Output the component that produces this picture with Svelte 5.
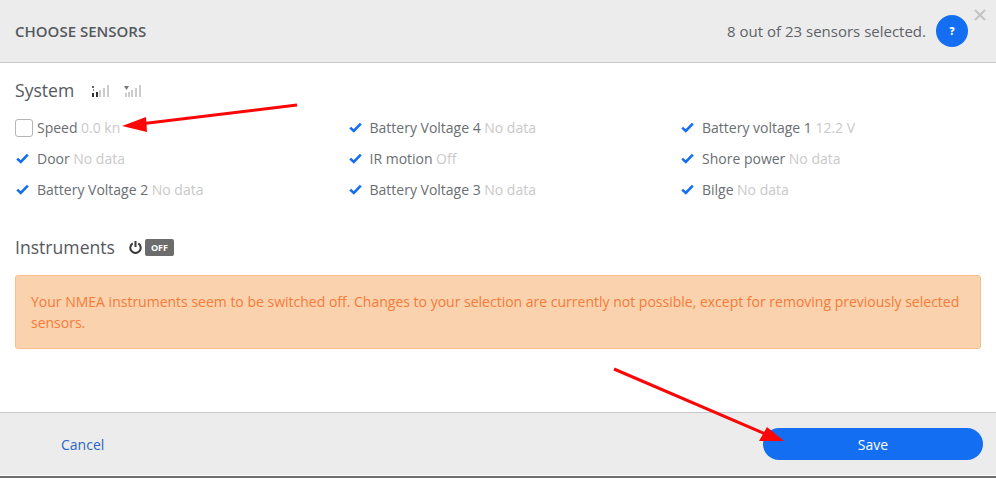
<script>
  const columns = [
    [
      { name: 'Speed', value: '0.0 kn', checked: false },
      { name: 'Door', value: 'No data', checked: true },
      { name: 'Battery Voltage 2', value: 'No data', checked: true }
    ],
    [
      { name: 'Battery Voltage 4', value: 'No data', checked: true },
      { name: 'IR motion', value: 'Off', checked: true },
      { name: 'Battery Voltage 3', value: 'No data', checked: true }
    ],
    [
      { name: 'Battery voltage 1', value: '12.2 V', checked: true },
      { name: 'Shore power', value: 'No data', checked: true },
      { name: 'Bilge', value: 'No data', checked: true }
    ]
  ];
</script>

<div class="page">
  <div class="modal">
    <header class="head">
      <h1>CHOOSE SENSORS</h1>
      <div class="count">
        <span>8 out of 23 sensors selected.</span>
        <span class="help">?</span>
      </div>
      <svg class="close" width="12" height="12" viewBox="0 0 12 12"><path d="M1 1L11 11M11 1L1 11" stroke="#c4c4c4" stroke-width="2.2" fill="none"/></svg>
    </header>

    <main class="body">
      <div class="title system">
        <h2>System</h2>
        <svg class="sig first" width="17" height="12" viewBox="0 0 17 12">
          <rect x="0" y="1" width="2" height="2" fill="#666"/>
          <rect x="1" y="4" width="1" height="2" fill="#888"/>
          <rect x="0" y="8" width="2" height="4" fill="#333"/>
          <rect x="4" y="7" width="2" height="5" fill="#333"/>
          <rect x="7" y="5" width="2" height="7" fill="#ccc"/>
          <rect x="11" y="3" width="2" height="9" fill="#ccc"/>
          <rect x="15" y="0" width="2" height="12" fill="#ccc"/>
        </svg>
        <svg class="sig" width="17" height="12" viewBox="0 0 17 12">
          <path d="M0 1h5L2.5 5z" fill="#777"/>
          <rect x="1" y="8" width="2" height="4" fill="#ccc"/>
          <rect x="4" y="7" width="2" height="5" fill="#ccc"/>
          <rect x="7" y="5" width="2" height="7" fill="#ccc"/>
          <rect x="11" y="3" width="2" height="9" fill="#ccc"/>
          <rect x="15" y="0" width="2" height="12" fill="#ccc"/>
        </svg>
      </div>

      <div class="grid">
        {#each columns as col}
          <div class="col">
            {#each col as s}
              <div class="row">
                {#if s.checked}
                  <svg class="tick" width="13" height="11" viewBox="0 0 13 11"><path d="M1.2 5.6L4.8 9L11.8 1.6" stroke="#136ef1" stroke-width="2.6" fill="none"/></svg>
                {:else}
                  <span class="box"></span>
                {/if}
                <span class="name">{s.name}</span>
                <span class="val">{s.value}</span>
              </div>
            {/each}
          </div>
        {/each}
      </div>

      <div class="title instruments">
        <h2>Instruments</h2>
        <svg class="power" width="13" height="13" viewBox="0 0 14 14"><path d="M4 2.6A5.6 5.6 0 1 0 10 2.6M7 0V6.5" stroke="#3a3a3a" stroke-width="2.2" fill="none"/></svg>
        <span class="off">OFF</span>
      </div>

      <div class="alert">Your NMEA instruments seem to be switched off. Changes to your selection are currently not possible, except for removing previously selected sensors.</div>
    </main>

    <footer class="foot">
      <span class="cancel">Cancel</span>
      <span class="save">Save</span>
    </footer>
  </div>

  <svg class="arrows" width="996" height="478" viewBox="0 0 996 478">
    <path d="M297 105L140 124" stroke="#fb0606" stroke-width="3" fill="none"/>
    <path d="M122 126L146 117L147 132z" fill="#fb0606"/>
    <path d="M614 369L770 436" stroke="#fb0606" stroke-width="3" fill="none"/>
    <path d="M784 441L759 441L767 427z" fill="#fb0606"/>
  </svg>
</div>

<style>
  :global(body) { margin: 0; background: #fff; }
  .page {
    position: relative;
    width: 996px;
    height: 478px;
    overflow: hidden;
    background: #6e6e6e;
    font-family: "Open Sans", "Liberation Sans", sans-serif;
    font-size: 14px;
    color: #5f6368;
  }
  .modal {
    width: 996px;
    height: 476px;
    box-sizing: border-box;
    padding-bottom: 1px;
    display: flex;
    flex-direction: column;
    background: #fff;
  }
  .head {
    position: relative;
    height: 62px;
    flex: none;
    display: flex;
    align-items: center;
    justify-content: space-between;
    padding: 0 28px 0 15px;
    background: #ececec;
    border-bottom: 1px solid #c9c9c9;
  }
  h1 { margin: 0; font-size: 15px; font-weight: 600; color: #55595e; }
  .count { display: flex; align-items: center; gap: 10px; font-size: 15px; color: #5f6368; }
  .help {
    width: 32px; height: 32px; border-radius: 50%;
    background: #136ef1; color: #fff;
    display: flex; align-items: center; justify-content: center;
    font-size: 10px; font-weight: 800;
  }
  .close { position: absolute; right: 10px; top: 9px; }
  .body { flex: 1; padding: 0 15px; }
  .title { display: flex; align-items: center; }
  .system { height: 27px; margin-top: 14px; }
  h2 { margin: 0; font-size: 17.6px; font-weight: 400; color: #55595e; line-height: 27px; }
  .sig.first { margin-left: 18px; }
  .sig { margin-left: 15px; }
  .grid { display: grid; grid-template-columns: repeat(3, 332.5px); margin-top: 8px; }
  .row { height: 31px; display: flex; align-items: center; white-space: nowrap; }
  .tick { margin: 0 8px 0 1px; flex: none; }
  .box {
    width: 16px; height: 16px; flex: none; margin-right: 4px;
    border: 1px solid #b5b5b5; border-radius: 3px; background: #fff;
  }
  .name { color: #6a6e72; margin-right: 3.5px; }
  .val { color: #c9c9c9; }
  .instruments { margin-top: 29px; height: 27px; }
  .power { margin-left: 14px; }
  .off {
    margin-left: 3px; height: 17px; width: 29px; border-radius: 2px;
    background: #6c6c6c; color: #fff; font-size: 9px; font-weight: 700;
    display: flex; align-items: center; justify-content: center;
  }
  .alert {
    margin-top: 14px;
    height: 74px;
    box-sizing: border-box;
    padding: 15px 15px;
    background: #fbd2ae;
    border: 1px solid #f5c08e;
    border-radius: 3px;
    color: #f47b38;
    font-size: 14px;
    line-height: 21px;
  }
  .foot {
    height: 63px;
    flex: none;
    box-sizing: border-box;
    display: flex;
    align-items: center;
    justify-content: space-between;
    padding: 0 13px 0 61px;
    background: #ececec;
    border-top: 1px solid #c9c9c9;
  }
  .cancel { color: #2a66c5; font-size: 14px; }
  .save {
    width: 220px; height: 32px; border-radius: 16px;
    background: #136ef1; color: #fff; font-size: 14px; font-weight: 500;
    display: flex; align-items: center; justify-content: center;
  }
  .arrows { position: absolute; left: 0; top: 0; pointer-events: none; }
</style>
